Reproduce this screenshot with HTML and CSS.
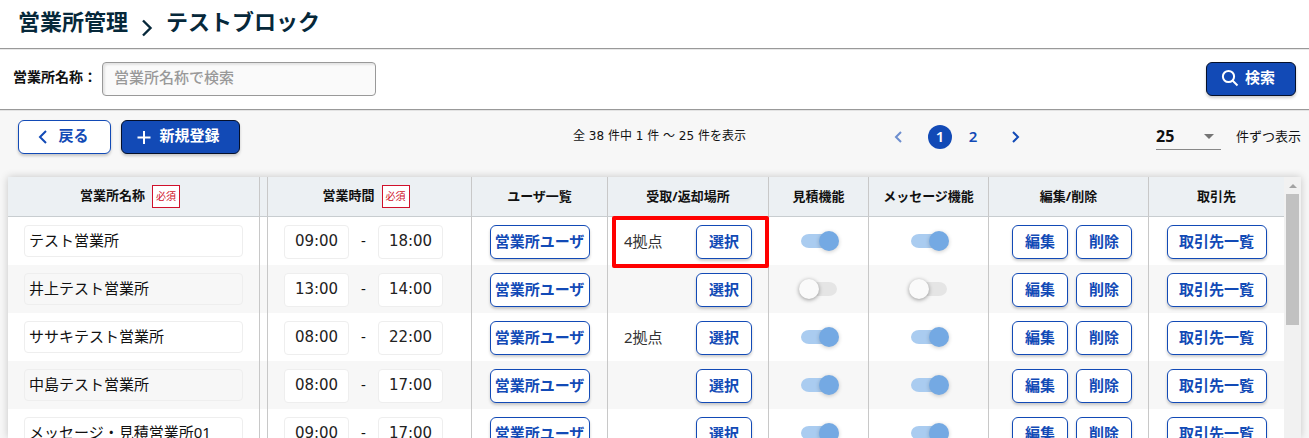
FILE: index.html
```html
<!DOCTYPE html>
<html lang="ja">

<head>
  <meta charset="UTF-8">
  <meta name="viewport" content="width=device-width, initial-scale=1.0">
  <title>営業所管理</title>
  <link rel="stylesheet" href="styles.css">
</head>

<body>
  <header class="page-header">
    <h1 class="page-title">営業所管理</h1>
    <svg class="title-arrow" viewBox="0 0 12 18"><path d="M2 1.5l7.5 7.5L2 16.5"/></svg>
    <h2 class="page-title">テストブロック</h2>
  </header>

  <form class="search-bar">
    <label class="search-label" for="officeName">営業所名称：</label>
    <input class="search-input" id="officeName" type="text" placeholder="営業所名称で検索">
    <button class="btn btn-primary btn-icon btn-search" type="button">
      <svg class="icon" viewBox="0 0 18 18"><circle cx="7.500" cy="7.500" r="5.6"/><path d="M11.500 11.500l5 5"/></svg>検索
    </button>
  </form>

  <main class="content">
    <div class="toolbar">
      <div class="toolbar-actions">
        <button class="btn btn-icon btn-back" type="button">
          <svg class="icon" viewBox="0 0 18 18"><path d="M12 4L6 10l6 6"/></svg>戻る
        </button>
        <button class="btn btn-primary btn-icon btn-new" type="button">
          <svg class="icon" viewBox="0 0 18 18"><path d="M9 4v13M2.500 10.500h13"/></svg>新規登録
        </button>
      </div>
      <div class="result-count">全 38 件中 1 件 ～ 25 件を表示</div>
      <div class="toolbar-paging">
        <nav class="pager">
          <a class="page-link page-prev" href="#" aria-label="前へ"><svg viewBox="0 0 12 12"><path d="M9 1L4 6l5 5"/></svg></a>
          <a class="page-link page-current" href="#">1</a>
          <a class="page-link" href="#">2</a>
          <a class="page-link page-next" href="#" aria-label="次へ"><svg viewBox="0 0 12 12"><path d="M4 1l5 5-5 5"/></svg></a>
        </nav>
        <span class="size-box">
          <select class="size-select" id="pageSize">
            <option>25</option>
            <option>50</option>
          </select>
        </span>
        <label class="size-label" for="pageSize">件ずつ表示</label>
      </div>
    </div>

    <div class="table-panel">
      <table class="office-table">
        <colgroup>
          <col>
          <col class="col-gap">
          <col class="col-hours">
          <col class="col-user">
          <col class="col-place">
          <col class="col-estimate">
          <col class="col-message">
          <col class="col-edit">
          <col class="col-client">
        </colgroup>
        <thead>
          <tr>
            <th>営業所名称<span class="required">必須</span></th>
            <th></th>
            <th>営業時間<span class="required">必須</span></th>
            <th>ユーザ一覧</th>
            <th>受取/返却場所</th>
            <th>見積機能</th>
            <th>メッセージ機能</th>
            <th>編集/削除</th>
            <th>取引先</th>
          </tr>
        </thead>
        <tbody>
          <tr>
            <td><input class="name-input" type="text" aria-label="営業所名称" value="テスト営業所"></td>
            <td></td>
            <td><div class="hours"><input class="time-input" type="text" aria-label="開始" value="09:00"><span>-</span><input class="time-input" type="text" aria-label="終了" value="18:00"></div></td>
            <td class="center"><button class="btn btn-wide" type="button">営業所ユーザ</button></td>
            <td class="place-cell"><div class="place"><span>4拠点</span><button class="btn btn-small" type="button">選択</button></div><div class="highlight"></div></td>
            <td class="center"><input class="switch" type="checkbox" aria-label="見積機能" checked></td>
            <td class="center"><input class="switch" type="checkbox" aria-label="メッセージ機能" checked></td>
            <td><div class="edit"><button class="btn btn-small" type="button">編集</button><button class="btn btn-small" type="button">削除</button></div></td>
            <td class="center"><button class="btn btn-wide" type="button">取引先一覧</button></td>
          </tr>
          <tr>
            <td><input class="name-input" type="text" aria-label="営業所名称" value="井上テスト営業所"></td>
            <td></td>
            <td><div class="hours"><input class="time-input" type="text" aria-label="開始" value="13:00"><span>-</span><input class="time-input" type="text" aria-label="終了" value="14:00"></div></td>
            <td class="center"><button class="btn btn-wide" type="button">営業所ユーザ</button></td>
            <td><div class="place"><span></span><button class="btn btn-small" type="button">選択</button></div></td>
            <td class="center"><input class="switch" type="checkbox" aria-label="見積機能"></td>
            <td class="center"><input class="switch" type="checkbox" aria-label="メッセージ機能"></td>
            <td><div class="edit"><button class="btn btn-small" type="button">編集</button><button class="btn btn-small" type="button">削除</button></div></td>
            <td class="center"><button class="btn btn-wide" type="button">取引先一覧</button></td>
          </tr>
          <tr>
            <td><input class="name-input" type="text" aria-label="営業所名称" value="ササキテスト営業所"></td>
            <td></td>
            <td><div class="hours"><input class="time-input" type="text" aria-label="開始" value="08:00"><span>-</span><input class="time-input" type="text" aria-label="終了" value="22:00"></div></td>
            <td class="center"><button class="btn btn-wide" type="button">営業所ユーザ</button></td>
            <td><div class="place"><span>2拠点</span><button class="btn btn-small" type="button">選択</button></div></td>
            <td class="center"><input class="switch" type="checkbox" aria-label="見積機能" checked></td>
            <td class="center"><input class="switch" type="checkbox" aria-label="メッセージ機能" checked></td>
            <td><div class="edit"><button class="btn btn-small" type="button">編集</button><button class="btn btn-small" type="button">削除</button></div></td>
            <td class="center"><button class="btn btn-wide" type="button">取引先一覧</button></td>
          </tr>
          <tr>
            <td><input class="name-input" type="text" aria-label="営業所名称" value="中島テスト営業所"></td>
            <td></td>
            <td><div class="hours"><input class="time-input" type="text" aria-label="開始" value="08:00"><span>-</span><input class="time-input" type="text" aria-label="終了" value="17:00"></div></td>
            <td class="center"><button class="btn btn-wide" type="button">営業所ユーザ</button></td>
            <td><div class="place"><span></span><button class="btn btn-small" type="button">選択</button></div></td>
            <td class="center"><input class="switch" type="checkbox" aria-label="見積機能" checked></td>
            <td class="center"><input class="switch" type="checkbox" aria-label="メッセージ機能" checked></td>
            <td><div class="edit"><button class="btn btn-small" type="button">編集</button><button class="btn btn-small" type="button">削除</button></div></td>
            <td class="center"><button class="btn btn-wide" type="button">取引先一覧</button></td>
          </tr>
          <tr>
            <td><input class="name-input" type="text" aria-label="営業所名称" value="メッセージ・見積営業所01"></td>
            <td></td>
            <td><div class="hours"><input class="time-input" type="text" aria-label="開始" value="09:00"><span>-</span><input class="time-input" type="text" aria-label="終了" value="17:00"></div></td>
            <td class="center"><button class="btn btn-wide" type="button">営業所ユーザ</button></td>
            <td><div class="place"><span></span><button class="btn btn-small" type="button">選択</button></div></td>
            <td class="center"><input class="switch" type="checkbox" aria-label="見積機能" checked></td>
            <td class="center"><input class="switch" type="checkbox" aria-label="メッセージ機能" checked></td>
            <td><div class="edit"><button class="btn btn-small" type="button">編集</button><button class="btn btn-small" type="button">削除</button></div></td>
            <td class="center"><button class="btn btn-wide" type="button">取引先一覧</button></td>
          </tr>
        </tbody>
      </table>
      <div class="scrollbar">
        <div class="scroll-arrow"></div>
        <div class="scroll-thumb"></div>
      </div>
    </div>
  </main>
</body>

</html>
```
FILE: styles.css
```css
* {
  box-sizing: border-box;
}

body {
  margin: 0;
  height: 100vh;
  display: flex;
  flex-direction: column;
  overflow: hidden;
  background: #fff;
  color: #111;
  font-family: "Noto Sans", "Noto Sans CJK JP", sans-serif;
  font-size: 15px;
}

input,
select,
button {
  font-family: inherit;
  font-size: 15px;
}

/* ヘッダー */
.page-header {
  display: flex;
  align-items: center;
  height: 49px;
  padding: 0 18px 6px;
  border-bottom: 1px solid #999;
}

.page-title {
  margin: 0;
  font-size: 22px;
  line-height: 32px;
  font-weight: 700;
  color: #06283a;
}

.title-arrow {
  width: 12px;
  height: 18px;
  margin: 14px 13px 0;
  fill: none;
  stroke: #06283a;
  stroke-width: 2.4;
}

/* 検索 */
.search-bar {
  display: flex;
  align-items: center;
  height: 61px;
  padding: 0 13px;
  border-bottom: 1px solid #999;
  box-shadow: inset 0 1px 0 #e8e8e8;
}

.search-label {
  width: 89px;
  font-size: 14px;
  font-weight: 700;
  line-height: 20px;
  padding-bottom: 4px;
  white-space: nowrap;
}

.search-input {
  width: 274px;
  height: 34px;
  padding: 0 11px 4px;
  border: 1px solid #999;
  border-radius: 4px;
  background: #fafafa;
  box-shadow: inset 2px 2px 2px #e4e4e4;
}

.search-input::placeholder {
  color: #999;
  font-weight: 500;
}

/* ボタン */
.btn {
  display: inline-flex;
  align-items: center;
  justify-content: center;
  height: 34px;
  padding: 0 0 2px;
  border: 1px solid #124ab6;
  border-radius: 6px;
  background: #fff;
  color: #124ab6;
  font-weight: 700;
  line-height: 20px;
  white-space: nowrap;
  box-shadow: 0 2px 3px rgba(0, 0, 0, 0.2);
  cursor: pointer;
}

.btn-primary {
  background: #124ab6;
  border-color: #05102a;
  color: #fff;
}

.btn-icon {
  padding: 0 6px 4px 0;
}

.icon {
  width: 18px;
  height: 18px;
  margin: 2px 6px 0 0;
  fill: none;
  stroke: currentColor;
  stroke-width: 2;
}

.btn-search {
  width: 90px;
  margin-left: auto;
}

.btn-back {
  width: 93px;
}

.btn-new {
  width: 119px;
}

.btn-small {
  width: 56px;
}

.btn-wide {
  width: 100px;
}

/* ツールバー */
.content {
  flex: 1;
  min-height: 0;
  display: flex;
  flex-direction: column;
  padding: 0 8px;
  background: #f7f7f7;
  box-shadow: inset 0 1px 0 #e3e3e3;
}

.toolbar {
  display: grid;
  grid-template-columns: 1fr auto 1fr;
  align-items: center;
  flex: none;
  height: 67px;
  padding: 0 0 13px 10px;
}

.toolbar-actions {
  display: flex;
  gap: 10px;
}

.result-count {
  font-family: "DejaVu Sans", "Noto Sans CJK JP", sans-serif;
  font-size: 12px;
  line-height: 18px;
  padding-bottom: 2px;
  white-space: nowrap;
}

.toolbar-paging {
  display: flex;
  align-items: center;
  justify-content: flex-end;
}

.pager {
  display: flex;
  align-items: center;
  gap: 9px;
  margin-right: 129px;
}

.page-link {
  width: 24px;
  height: 24px;
  line-height: 22px;
  border-radius: 50%;
  color: #124ab6;
  font-size: 15px;
  font-weight: 600;
  text-align: center;
  text-decoration: none;
}

.page-link svg {
  width: 12px;
  height: 12px;
  margin-top: 6px;
  fill: none;
  stroke: currentColor;
  stroke-width: 2;
}

.page-current {
  background: #124ab6;
  color: #fff;
}

.page-prev {
  margin-right: 9px;
  opacity: 0.6;
}

.page-next {
  margin-left: 9px;
}

.size-box {
  position: relative;
  width: 65px;
  margin-right: 15px;
}

.size-box::after {
  content: "";
  position: absolute;
  right: 7px;
  top: 10px;
  border: 5px solid transparent;
  border-top-color: #757575;
  border-bottom: 0;
  pointer-events: none;
}

.size-select {
  display: block;
  width: 100%;
  height: 26px;
  padding: 0 0 2px;
  border: 0;
  border-bottom: 1px solid #888;
  border-radius: 0;
  background: transparent;
  color: #111;
  font-size: 16px;
  font-weight: 700;
  -webkit-appearance: none;
  appearance: none;
}

.size-label {
  padding-bottom: 4px;
  font-size: 13px;
  white-space: nowrap;
}

/* 一覧テーブル */
.table-panel {
  flex: 1;
  min-height: 0;
  display: flex;
  align-items: stretch;
  background: #fff;
  box-shadow: 0 0 8px rgba(0, 0, 0, 0.2);
}

.office-table {
  flex: 1;
  align-self: flex-start;
  table-layout: fixed;
  border-collapse: separate;
  border-spacing: 0;
}

.col-gap {
  width: 8px;
}

.col-hours {
  width: 204px;
}

.col-user {
  width: 136px;
}

.col-client {
  width: 135px;
}

.col-place {
  width: 161px;
}

.col-estimate {
  width: 100px;
}

.col-message {
  width: 120px;
}

.col-edit {
  width: 160px;
}

.office-table th {
  height: 40px;
  padding: 0 0 2px;
  background: #ecf0f3;
  border-right: 1px solid #c8c8c8;
  border-bottom: 1px solid #c8cdd0;
  font-size: 13px;
  line-height: 20px;
  white-space: nowrap;
}

.office-table td {
  height: 48px;
  padding: 8px 16px 6px;
  border-right: 1px solid #c8c8c8;
  vertical-align: top;
}

.office-table th:last-child,
.office-table td:last-child {
  border-right: 0;
}

.office-table td:nth-child(2),
.office-table .center {
  padding-left: 0;
  padding-right: 0;
}

.office-table .center {
  text-align: center;
}

.office-table tbody tr:nth-child(even) {
  background: #f7f7f7;
}

.required {
  display: inline-block;
  width: 28px;
  height: 23px;
  margin: 1px 7px 0;
  border: 1px solid #d0112b;
  background: #fff;
  color: #d0112b;
  font-size: 10px;
  font-weight: 400;
  line-height: 21px;
  text-align: center;
  vertical-align: middle;
}

.name-input,
.time-input {
  display: block;
  border: 1px solid #eee;
  border-radius: 4px;
  color: #111;
}

.name-input {
  width: 100%;
  height: 32px;
  padding: 0 4px 3px;
  background: transparent;
}

.time-input {
  width: 65px;
  height: 34px;
  padding: 0 0 2px;
  background: #fff;
  color: #222;
  font-family: "DejaVu Sans", sans-serif;
  text-align: center;
}

.hours {
  display: flex;
  align-items: center;
}

.hours span {
  width: 29px;
  padding-bottom: 4px;
  text-align: center;
}

.place {
  display: flex;
  align-items: center;
  justify-content: space-between;
  color: #333;
}

.place span {
  padding-bottom: 4px;
}

.place-cell {
  position: relative;
}

/* 選択中の枠 */
.highlight {
  position: absolute;
  top: -1px;
  left: 4px;
  right: -1px;
  height: 52px;
  border: 4px solid #f00;
  border-radius: 2px;
  pointer-events: none;
}

.edit {
  display: flex;
  justify-content: flex-end;
  gap: 8px;
}

/* スイッチ */
.switch {
  display: inline-flex;
  align-items: center;
  width: 40px;
  height: 20px;
  margin: 6px 0 0;
  border: 3px solid transparent;
  border-left-width: 2px;
  border-right-width: 2px;
  border-radius: 10px;
  background: #e5e5e5;
  background-clip: padding-box;
  -webkit-appearance: none;
  appearance: none;
  cursor: pointer;
}

.switch::before {
  content: "";
  flex: none;
  width: 20px;
  height: 20px;
  margin: 0 -2px;
  border-radius: 50%;
  background: #fafafa;
  box-shadow: 0 1px 4px rgba(0, 0, 0, 0.4);
}

.switch:checked {
  justify-content: flex-end;
  background-color: #aaccf0;
}

.switch:checked::before {
  background: #74a9e3;
  box-shadow: 0 1px 4px rgba(0, 0, 0, 0.2);
}

/* スクロールバー */
.scrollbar {
  flex: none;
  width: 17px;
  padding: 7px 2px 0;
  background: #f1f1f1;
}

.scroll-arrow {
  width: 8px;
  margin: 0 auto 6px;
  border: 4px solid transparent;
  border-top: 0;
  border-bottom-color: #a3a3a3;
}

.scroll-thumb {
  height: 131px;
  background: #c1c1c1;
}
```
